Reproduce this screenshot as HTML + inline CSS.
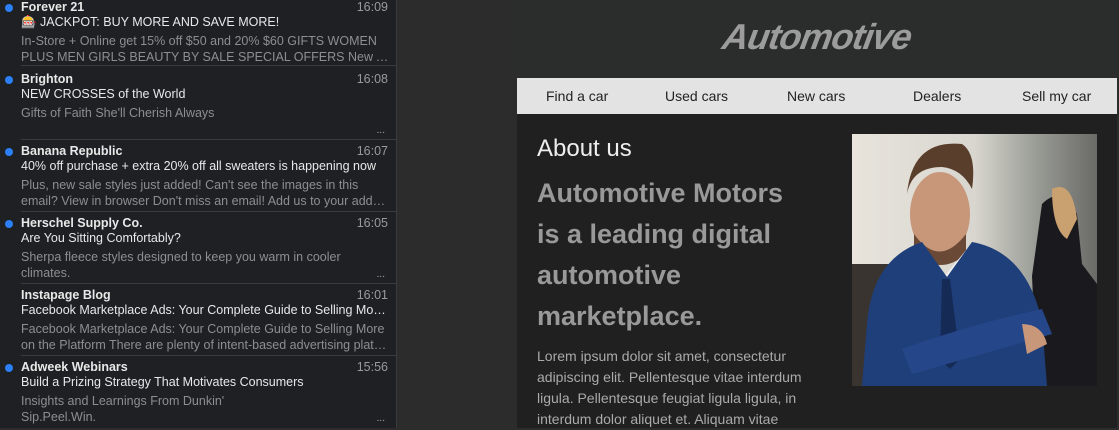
<!DOCTYPE html>
<html><head><meta charset="utf-8"><style>
*{margin:0;padding:0;box-sizing:border-box}
body{width:1119px;height:428px;overflow:hidden;background:#2c2c2c;font-family:"Liberation Sans",Arial,sans-serif;position:relative}
#list{position:absolute;left:0;top:0;width:397px;height:428px;background:#1f2024;border-right:1px solid #3a3a3c;overflow:hidden}
.row{position:absolute;left:0;width:397px;height:72px}
.row .sep{position:absolute;left:21px;right:0;bottom:0;height:1px;background:#3a3b3e}
.dot{position:absolute;left:5px;top:4px;width:8px;height:8px;border-radius:50%;background:#2a7ff5}
.from{position:absolute;left:21px;top:0;font-weight:bold;font-size:12.5px;color:#e8e8e8}
.time{position:absolute;right:9px;top:0;font-size:12.5px;color:#9a9a9c}
.subj{position:absolute;left:21px;top:15px;font-size:12.5px;color:#e8e8e8;white-space:nowrap;width:368px;overflow:hidden;text-overflow:ellipsis}
.prev{position:absolute;left:21px;top:33px;font-size:12.5px;color:#8e8e91;line-height:16px;width:368px}
.prev div{white-space:nowrap;overflow:hidden;text-overflow:ellipsis}
.more{position:absolute;right:12px;bottom:4px;color:#aaa;font-size:10px}
#mail{position:absolute;left:517px;top:0;width:600px;height:428px;background:#202020}
#hdr{position:absolute;left:0;top:0;width:600px;height:78px;background:#2b2c2c}
#logo{position:absolute;left:0;width:600px;top:16px;text-align:center;font:italic bold 36px "Liberation Sans",sans-serif;color:#9c9c9c;letter-spacing:-1px;transform:skewX(-10deg)}
#nav{position:absolute;left:0;top:78px;width:600px;height:36px;background:#e2e3e2;font-size:14px;color:#222}
#nav span{position:absolute;top:10px}
h2{position:absolute;left:20px;top:135px;font-weight:normal;font-size:24px;color:#eee}
h1{position:absolute;left:20px;top:173px;font-size:27px;line-height:41px;color:#999;font-weight:bold;width:258px}
p{position:absolute;left:20px;top:346px;font-size:14px;line-height:21px;color:#aaa;width:280px}
</style></head><body>
<div id="list">
<div class="row" style="top:-6px"><div class="dot" style="top:10px"></div><div class="from" style="top:6px">Forever 21</div><div class="time" style="top:6px">16:09</div><div class="subj" style="top:21px">🎰 JACKPOT: BUY MORE AND SAVE MORE!</div><div class="prev" style="top:39px"><div>In-Store + Online get 15% off $50 and 20% $60 GIFTS WOMEN</div><div>PLUS MEN GIRLS BEAUTY BY SALE SPECIAL OFFERS New Arrivals</div></div><div class="sep"></div></div>
<div class="row" style="top:72px;height:68px"><div class="dot" style="top:4px"></div><div class="from">Brighton</div><div class="time">16:08</div><div class="subj">NEW CROSSES of the World</div><div class="prev"><div>Gifts of Faith She'll Cherish Always</div></div><div class="more">...</div><div class="sep"></div></div>
<div class="row" style="top:144px;height:68px"><div class="dot"></div><div class="from">Banana Republic</div><div class="time">16:07</div><div class="subj">40% off purchase + extra 20% off all sweaters is happening now</div><div class="prev"><div>Plus, new sale styles just added! Can't see the images in this</div><div>email? View in browser Don't miss an email! Add us to your address book</div></div><div class="sep"></div></div>
<div class="row" style="top:216px;height:68px"><div class="dot"></div><div class="from">Herschel Supply Co.</div><div class="time">16:05</div><div class="subj">Are You Sitting Comfortably?</div><div class="prev"><div>Sherpa fleece styles designed to keep you warm in cooler</div><div>climates.</div></div><div class="more">...</div><div class="sep"></div></div>
<div class="row" style="top:288px;height:68px"><div class="from">Instapage Blog</div><div class="time">16:01</div><div class="subj">Facebook Marketplace Ads: Your Complete Guide to Selling More on the Platform</div><div class="prev"><div>Facebook Marketplace Ads: Your Complete Guide to Selling More</div><div>on the Platform There are plenty of intent-based advertising platforms</div></div><div class="sep"></div></div>
<div class="row" style="top:360px;height:68px"><div class="dot"></div><div class="from">Adweek Webinars</div><div class="time">15:56</div><div class="subj">Build a Prizing Strategy That Motivates Consumers</div><div class="prev"><div>Insights and Learnings From Dunkin'</div><div>Sip.Peel.Win.</div></div><div class="more">...</div></div>
</div>
<div id="mail">
<div id="hdr"><div id="logo">Automotive</div></div>
<div id="nav"><span style="left:29px">Find a car</span><span style="left:148px">Used cars</span><span style="left:270px">New cars</span><span style="left:396px">Dealers</span><span style="left:505px">Sell my car</span></div>
<h2>About us</h2>
<h1>Automotive Motors is a leading digital automotive marketplace.</h1>
<p>Lorem ipsum dolor sit amet, consectetur adipiscing elit. Pellentesque vitae interdum ligula. Pellentesque feugiat ligula ligula, in interdum dolor aliquet et. Aliquam vitae</p>
<svg style="position:absolute;left:335px;top:134px" width="245" height="252" viewBox="0 0 245 252">
<defs><linearGradient id="bg" x1="0" x2="1"><stop offset="0" stop-color="#e8e4dc"/><stop offset=".5" stop-color="#d8d6cf"/><stop offset=".75" stop-color="#9a9c96"/><stop offset="1" stop-color="#6a6a66"/></linearGradient></defs>
<rect width="245" height="252" fill="url(#bg)"/>
<rect x="0" y="130" width="40" height="122" fill="#3a3430"/>
<path d="M190 70 q20-20 35 10 l5 50 l15 20 v102 h-60 l-5-110 z" fill="#1a1a1e"/>
<path d="M200 55 q20-10 25 30 l-10 20 q-15-10-15-50z" fill="#c9a070"/>
<ellipse cx="88" cy="80" rx="30" ry="42" fill="#c8977a"/>
<path d="M55 60 q5-55 55-50 q15 10 10 45 q-10-20-30-22 q-30 0-35 27z" fill="#5a3e2c"/>
<path d="M62 100 q25 35 52 0 v20 q-25 22-52 0z" fill="#6a4a36"/>
<path d="M70 115 l20 30 l25-30 l10 20 l-30 20z" fill="#eee"/>
<path d="M15 190 q5-65 55-82 l25 35 l25-35 q55 10 70 80 l5 64 h-185z" fill="#1f3f7a"/>
<path d="M90 145 l8 0 l10 80 l-10 10 l-10-10z" fill="#152a55"/>
<path d="M50 215 q70-25 140-40 l10 25 q-70 20-140 40z" fill="#25478a"/>
<path d="M170 190 q20 0 25 20 l-20 10z" fill="#c8977a"/>
</svg>
</div>
</body></html>
